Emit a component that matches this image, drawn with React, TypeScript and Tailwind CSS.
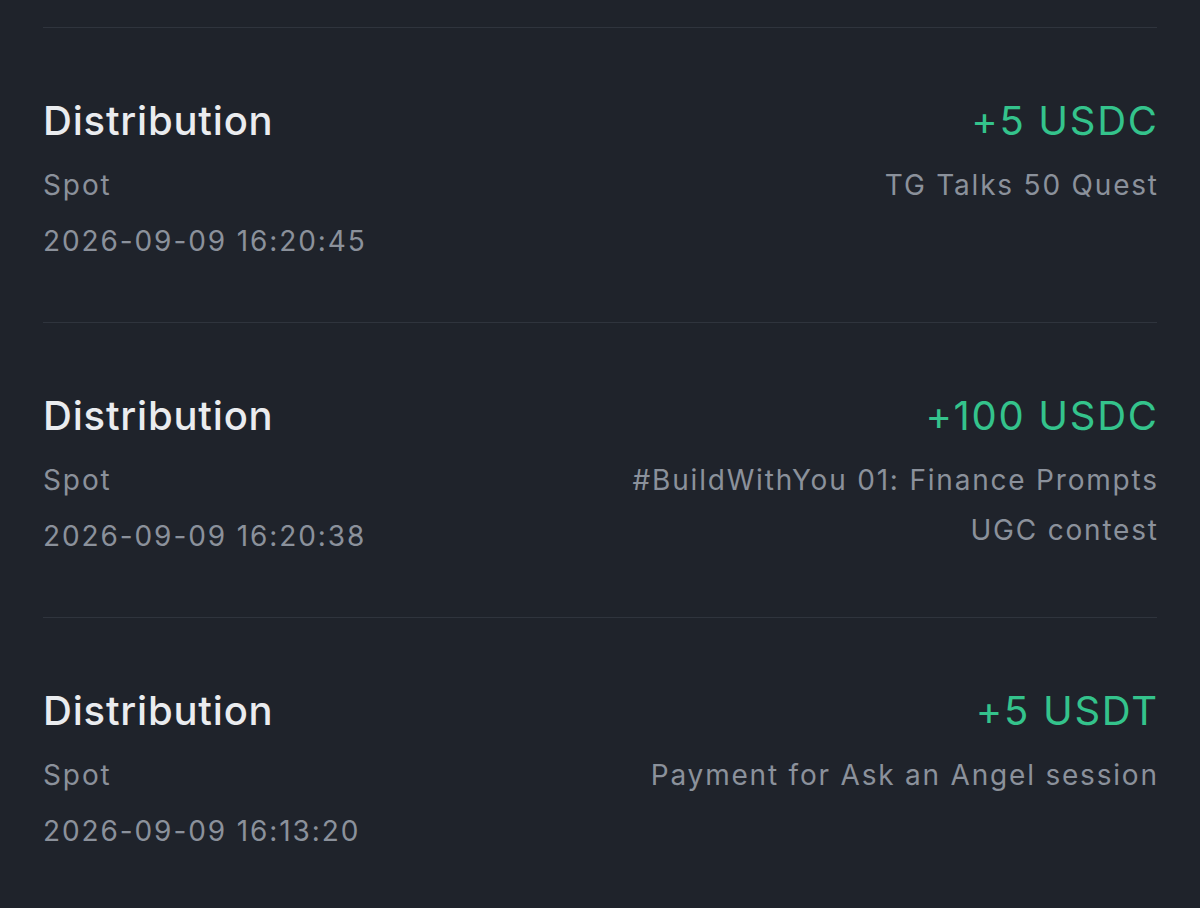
import React from "react";

type Row = {
  title: string;
  account: string;
  date: string;
  amount: string;
  desc: string[];
};

const rows: Row[] = [
  {
    title: "Distribution",
    account: "Spot",
    date: "2026-09-09 16:20:45",
    amount: "+5 USDC",
    desc: ["TG Talks 50 Quest"],
  },
  {
    title: "Distribution",
    account: "Spot",
    date: "2026-09-09 16:20:38",
    amount: "+100 USDC",
    desc: ["#BuildWithYou 01: Finance Prompts", "UGC contest"],
  },
  {
    title: "Distribution",
    account: "Spot",
    date: "2026-09-09 16:13:20",
    amount: "+5 USDT",
    desc: ["Payment for Ask an Angel session"],
  },
];

export default function App() {
  return (
    <div
      className="w-[1200px] h-[908px] overflow-hidden bg-[#1f232b] px-[43px] pt-[27px]"
      style={{ fontFamily: "Inter, 'Noto Sans', sans-serif" }}
    >
      {rows.map((r, i) => (
        <div
          key={i}
          className="border-t border-[#2f343d] h-[295px] pt-[69px] flex justify-between"
        >
          <div className="flex flex-col">
            <div className="text-[40px] leading-[48px] font-medium tracking-[0.8px] text-[#eaecef]">
              {r.title}
            </div>
            <div className="mt-[12px] text-[28px] leading-[56px] tracking-[1.9px] text-[#8b919b]">
              <div>{r.account}</div>
              <div>{r.date}</div>
            </div>
          </div>
          <div className="flex flex-col items-end text-right">
            <div className="text-[40px] leading-[48px] font-normal tracking-[1.7px] mr-[-1.7px] text-[#34c38c]">
              {r.amount}
            </div>
            <div className="mt-[15px] text-[28px] leading-[50px] tracking-[1.8px] mr-[-1.8px] text-[#8b919b]">
              {r.desc.map((d, j) => (
                <div key={j}>{d}</div>
              ))}
            </div>
          </div>
        </div>
      ))}
    </div>
  );
}
